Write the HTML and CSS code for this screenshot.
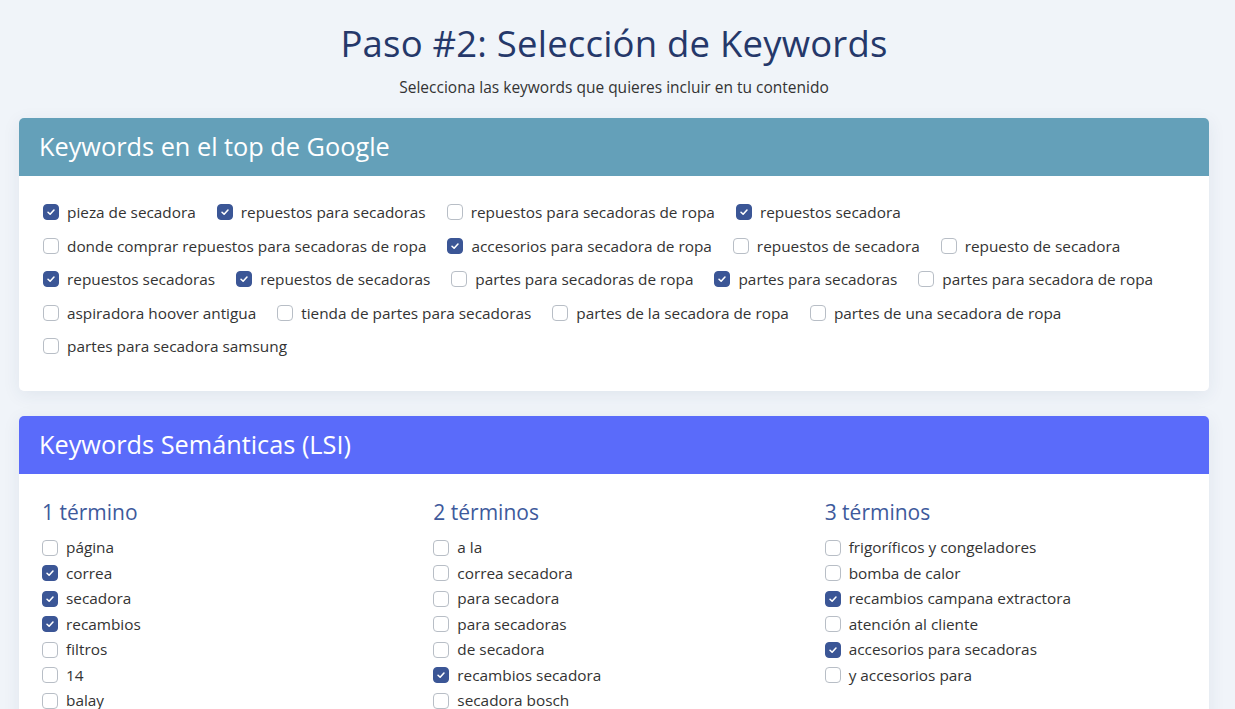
FILE: index.html
```html
<!DOCTYPE html>
<html lang="es">
<head>
<meta charset="utf-8">
<title>Paso #2: Selección de Keywords</title>
<link rel="stylesheet" href="styles.css">
</head>
<body>
<main class="page">
  <header class="intro">
    <h1 class="title">Paso #2: Selección de Keywords</h1>
    <p class="subtitle">Selecciona las keywords que quieres incluir en tu contenido</p>
  </header>

  <section class="card">
    <h2 class="card-head head-teal">Keywords en el top de Google</h2>
    <div class="card-body">
      <div class="kw-wrap">
        <label class="kw"><span class="cb on"><svg viewBox="0 0 16 16"><path d="M4.6 8.3 L7 10.6 L11.4 5.8"/></svg></span>pieza de secadora</label>
        <label class="kw"><span class="cb on"><svg viewBox="0 0 16 16"><path d="M4.6 8.3 L7 10.6 L11.4 5.8"/></svg></span>repuestos para secadoras</label>
        <label class="kw"><span class="cb"></span>repuestos para secadoras de ropa</label>
        <label class="kw"><span class="cb on"><svg viewBox="0 0 16 16"><path d="M4.6 8.3 L7 10.6 L11.4 5.8"/></svg></span>repuestos secadora</label>
        <label class="kw"><span class="cb"></span>donde comprar repuestos para secadoras de ropa</label>
        <label class="kw"><span class="cb on"><svg viewBox="0 0 16 16"><path d="M4.6 8.3 L7 10.6 L11.4 5.8"/></svg></span>accesorios para secadora de ropa</label>
        <label class="kw"><span class="cb"></span>repuestos de secadora</label>
        <label class="kw"><span class="cb"></span>repuesto de secadora</label>
        <label class="kw"><span class="cb on"><svg viewBox="0 0 16 16"><path d="M4.6 8.3 L7 10.6 L11.4 5.8"/></svg></span>repuestos secadoras</label>
        <label class="kw"><span class="cb on"><svg viewBox="0 0 16 16"><path d="M4.6 8.3 L7 10.6 L11.4 5.8"/></svg></span>repuestos de secadoras</label>
        <label class="kw"><span class="cb"></span>partes para secadoras de ropa</label>
        <label class="kw"><span class="cb on"><svg viewBox="0 0 16 16"><path d="M4.6 8.3 L7 10.6 L11.4 5.8"/></svg></span>partes para secadoras</label>
        <label class="kw"><span class="cb"></span>partes para secadora de ropa</label>
        <label class="kw"><span class="cb"></span>aspiradora hoover antigua</label>
        <label class="kw"><span class="cb"></span>tienda de partes para secadoras</label>
        <label class="kw"><span class="cb"></span>partes de la secadora de ropa</label>
        <label class="kw"><span class="cb"></span>partes de una secadora de ropa</label>
        <label class="kw"><span class="cb"></span>partes para secadora samsung</label>
      </div>
    </div>
  </section>

  <section class="card">
    <h2 class="card-head head-blue">Keywords Semánticas (LSI)</h2>
    <div class="card-body cols">
      <div class="col">
        <h3 class="col-title">1 término</h3>
        <label class="item"><span class="cb"></span>página</label>
        <label class="item"><span class="cb on"><svg viewBox="0 0 16 16"><path d="M4.6 8.3 L7 10.6 L11.4 5.8"/></svg></span>correa</label>
        <label class="item"><span class="cb on"><svg viewBox="0 0 16 16"><path d="M4.6 8.3 L7 10.6 L11.4 5.8"/></svg></span>secadora</label>
        <label class="item"><span class="cb on"><svg viewBox="0 0 16 16"><path d="M4.6 8.3 L7 10.6 L11.4 5.8"/></svg></span>recambios</label>
        <label class="item"><span class="cb"></span>filtros</label>
        <label class="item"><span class="cb"></span>14</label>
        <label class="item"><span class="cb"></span>balay</label>
      </div>
      <div class="col">
        <h3 class="col-title">2 términos</h3>
        <label class="item"><span class="cb"></span>a la</label>
        <label class="item"><span class="cb"></span>correa secadora</label>
        <label class="item"><span class="cb"></span>para secadora</label>
        <label class="item"><span class="cb"></span>para secadoras</label>
        <label class="item"><span class="cb"></span>de secadora</label>
        <label class="item"><span class="cb on"><svg viewBox="0 0 16 16"><path d="M4.6 8.3 L7 10.6 L11.4 5.8"/></svg></span>recambios secadora</label>
        <label class="item"><span class="cb"></span>secadora bosch</label>
      </div>
      <div class="col">
        <h3 class="col-title">3 términos</h3>
        <label class="item"><span class="cb"></span>frigoríficos y congeladores</label>
        <label class="item"><span class="cb"></span>bomba de calor</label>
        <label class="item"><span class="cb on"><svg viewBox="0 0 16 16"><path d="M4.6 8.3 L7 10.6 L11.4 5.8"/></svg></span>recambios campana extractora</label>
        <label class="item"><span class="cb"></span>atención al cliente</label>
        <label class="item"><span class="cb on"><svg viewBox="0 0 16 16"><path d="M4.6 8.3 L7 10.6 L11.4 5.8"/></svg></span>accesorios para secadoras</label>
        <label class="item"><span class="cb"></span>y accesorios para</label>
      </div>
    </div>
  </section>
</main>
</body>
</html>
```

FILE: styles.css
```css
* { box-sizing: border-box; }
html, body { margin: 0; padding: 0; }
body {
  background: #f0f4f9;
  font-family: "Open Sans", "Noto Sans", sans-serif;
  color: #333;
}
.page {
  padding: 0 26px 40px 19px;
}
.intro {
  text-align: center;
  padding-top: 20px;
}
.title {
  margin: 0;
  font-size: 36.5px;
  line-height: 46px;
  font-weight: 400;
  color: #25386a;
  letter-spacing: 0.2px;
}
.subtitle {
  margin: 10px 0 0;
  font-size: 15.5px;
  line-height: 22px;
  color: #333;
}
.card {
  background: #fff;
  border-radius: 5px;
  overflow: hidden;
  box-shadow: 0 4px 18px rgba(40, 60, 100, 0.08);
  margin-top: 20px;
}
.card + .card { margin-top: 25px; }
.card-head {
  margin: 0;
  height: 58px;
  padding: 0 20px 3px;
  display: flex;
  align-items: center;
  font-size: 25.3px;
  font-weight: 400;
  color: #fff;
}
.head-teal { background: #64a0b9; }
.head-blue { background: #5a6bfa; }
.card-body {
  padding: 24px 24px 33px;
}
.kw-wrap {
  display: flex;
  flex-wrap: wrap;
  column-gap: 21px;
  row-gap: 9.5px;
}
.kw, .item {
  display: flex;
  align-items: center;
  font-size: 15.35px;
  line-height: 24px;
  color: #333;
  white-space: nowrap;
}
.kw { height: 24px; }
.cb {
  width: 16px;
  height: 16px;
  border: 1px solid #b8bec6;
  border-radius: 4px;
  background: #fff;
  margin-right: 8px;
  flex: none;
  display: flex;
  align-items: center;
  justify-content: center;
}
.cb.on {
  background: #3b5696;
  border-color: #3b5696;
}
.cb svg {
  width: 16px;
  height: 16px;
}
.cb svg path {
  fill: none;
  stroke: #fff;
  stroke-width: 1.8;
  stroke-linecap: round;
  stroke-linejoin: round;
}
.cols {
  display: grid;
  grid-template-columns: repeat(3, 1fr);
  column-gap: 30px;
  padding: 23px 23px 60px;
}
.col {
  display: flex;
  flex-direction: column;
}
.col-title {
  margin: 0 0 8px;
  font-size: 21px;
  line-height: 30px;
  font-weight: 400;
  color: #3e5a9c;
}
.item {
  height: 25.5px;
  line-height: 25.5px;
}
```
